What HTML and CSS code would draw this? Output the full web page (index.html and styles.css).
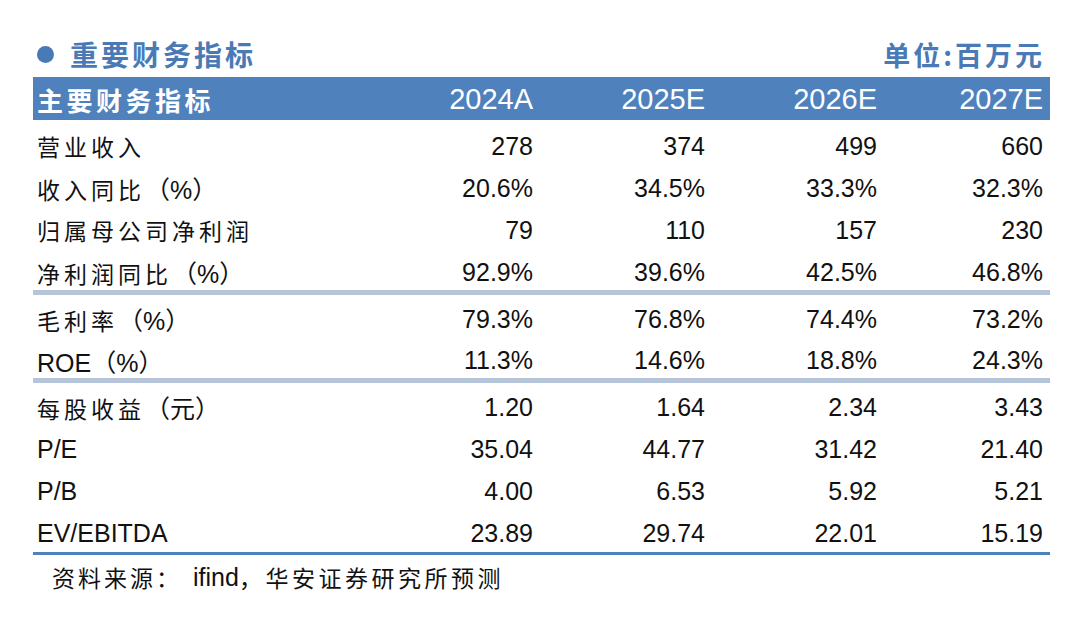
FILE: index.html
```html
<!DOCTYPE html>
<html lang="zh-CN">
<head>
<meta charset="utf-8">
<link rel="stylesheet" href="styles.css">
</head>
<body>
<div class="page">
  <div class="title-row">
    <div class="title"><span class="dot"></span><span class="title-text">重要财务指标</span></div>
    <div class="unit">单位:百万元</div>
  </div>
  <div class="table">
    <div class="row head">
      <div class="label"><span class="cn">主要财务指标</span></div>
      <div class="num">2024A</div>
      <div class="num">2025E</div>
      <div class="num">2026E</div>
      <div class="num">2027E</div>
    </div>
    <div class="group g1">
      <div class="row"><div class="label"><span class="cn">营业收入</span></div><div class="num">278</div><div class="num">374</div><div class="num">499</div><div class="num">660</div></div>
      <div class="row"><div class="label"><span class="cn">收入同比</span><span class="par">（%）</span></div><div class="num">20.6%</div><div class="num">34.5%</div><div class="num">33.3%</div><div class="num">32.3%</div></div>
      <div class="row"><div class="label"><span class="cn">归属母公司净利润</span></div><div class="num">79</div><div class="num">110</div><div class="num">157</div><div class="num">230</div></div>
      <div class="row"><div class="label"><span class="cn">净利润同比</span><span class="par">（%）</span></div><div class="num">92.9%</div><div class="num">39.6%</div><div class="num">42.5%</div><div class="num">46.8%</div></div>
    </div>
    <div class="group g2">
      <div class="row"><div class="label"><span class="cn">毛利率</span><span class="par">（%）</span></div><div class="num">79.3%</div><div class="num">76.8%</div><div class="num">74.4%</div><div class="num">73.2%</div></div>
      <div class="row"><div class="label">ROE<span class="par">（%）</span></div><div class="num">11.3%</div><div class="num">14.6%</div><div class="num">18.8%</div><div class="num">24.3%</div></div>
    </div>
    <div class="group g3">
      <div class="row"><div class="label"><span class="cn">每股收益</span><span class="par">（元）</span></div><div class="num">1.20</div><div class="num">1.64</div><div class="num">2.34</div><div class="num">3.43</div></div>
      <div class="row"><div class="label">P/E</div><div class="num">35.04</div><div class="num">44.77</div><div class="num">31.42</div><div class="num">21.40</div></div>
      <div class="row"><div class="label">P/B</div><div class="num">4.00</div><div class="num">6.53</div><div class="num">5.92</div><div class="num">5.21</div></div>
      <div class="row"><div class="label">EV/EBITDA</div><div class="num">23.89</div><div class="num">29.74</div><div class="num">22.01</div><div class="num">15.19</div></div>
    </div>
  </div>
  <div class="source"><span class="cn src-a">资料来源：</span><span class="latin">ifind</span><span class="cn src-b">，华安证券研究所预测</span></div>
</div>
</body>
</html>
```

FILE: styles.css
```css
html, body {
  margin: 0;
  padding: 0;
  background: #ffffff;
}

.page {
  width: 1080px;
  height: 618px;
  box-sizing: border-box;
  padding: 33px 30px 0 33px;
  font-family: "Liberation Sans", "Noto Sans CJK SC", sans-serif;
  color: #111111;
}

.title-row {
  height: 42px;
  margin-bottom: 2px;
  display: flex;
  align-items: center;
  justify-content: space-between;
  color: #4a7ab6;
  font-family: "Noto Sans CJK SC", sans-serif;
  font-weight: 700;
}

.title {
  display: flex;
  align-items: center;
  padding-left: 4px;
}

.dot {
  width: 17px;
  height: 17px;
  border-radius: 50%;
  background: #4a7ab6;
  margin-right: 16px;
}

.title-text {
  font-size: 28px;
  letter-spacing: 3px;
}

.unit {
  font-size: 27px;
  letter-spacing: 3px;
  padding-right: 5px;
}

.table {
  width: 1017px;
}

.row {
  display: grid;
  grid-template-columns: 328px 172px 172px 172px 166px;
  padding-right: 7px;
  height: 42px;
  box-sizing: border-box;
  padding-top: 6px;
  align-items: center;
  font-size: 25px;
}

.row.head {
  height: 43px;
  padding-top: 1px;
  background: #4f81bd;
  color: #ffffff;
  font-size: 29px;
}

.row.head .label .cn {
  font-weight: 700;
  font-size: 26px;
  letter-spacing: 3.5px;
}

.label {
  padding-left: 4px;
  white-space: nowrap;
}

.cn {
  font-family: "Noto Sans CJK SC", sans-serif;
  font-size: 23px;
  letter-spacing: 4px;
}

.par {
  font-size: 25px;
}

.num {
  text-align: right;
}

.g1 {
  padding-top: 2px;
  border-bottom: 5px solid #b6c4da;
}

.g2 {
  border-bottom: 5px solid #b6c4da;
}

.g2 .row {
  height: 41.5px;
}

.g3 {
  border-bottom: 3px solid #4f81bd;
}

.g3 .row {
  height: 42.25px;
}

.source {
  height: 44px;
  display: flex;
  align-items: center;
  padding-left: 19px;
  color: #111111;
}

.source .src-a {
  font-size: 23px;
  letter-spacing: 3px;
}

.source .src-b {
  font-size: 23px;
  letter-spacing: 3.5px;
}

.source .latin {
  font-size: 25px;
  margin-left: 11px;
  margin-right: 0;
}
```
